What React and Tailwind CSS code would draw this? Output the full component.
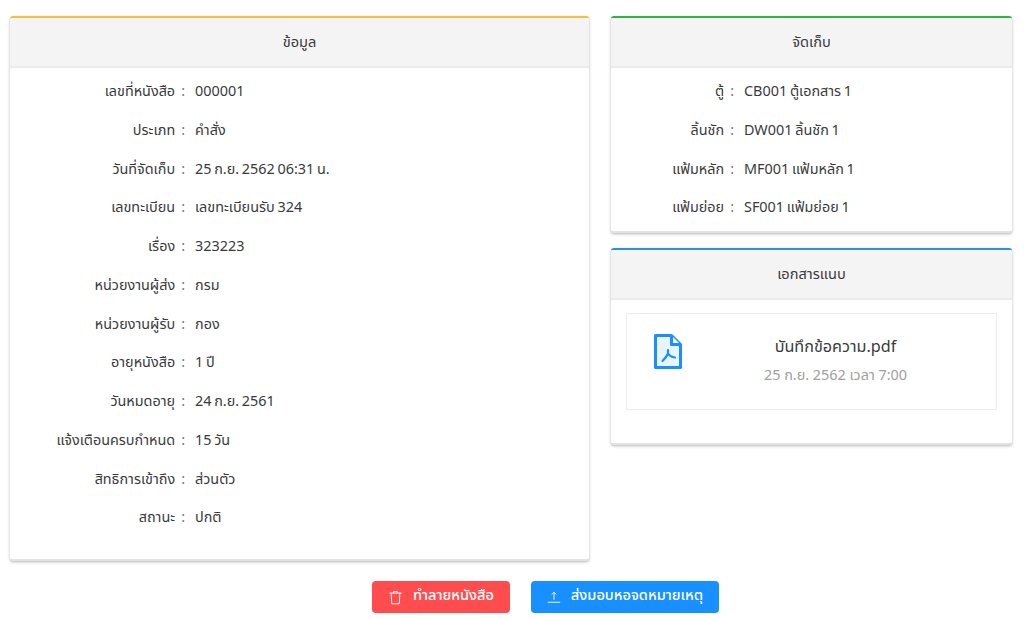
import React from "react";

const info = [
  ["เลขที่หนังสือ", "000001"],
  ["ประเภท", "คำสั่ง"],
  ["วันที่จัดเก็บ", "25 ก.ย. 2562 06:31 น."],
  ["เลขทะเบียน", "เลขทะเบียนรับ 324"],
  ["เรื่อง", "323223"],
  ["หน่วยงานผู้ส่ง", "กรม"],
  ["หน่วยงานผู้รับ", "กอง"],
  ["อายุหนังสือ", "1 ปี"],
  ["วันหมดอายุ", "24 ก.ย. 2561"],
  ["แจ้งเตือนครบกำหนด", "15 วัน"],
  ["สิทธิการเข้าถึง", "ส่วนตัว"],
  ["สถานะ", "ปกติ"],
];
const storage = [
  ["ตู้", "CB001 ตู้เอกสาร 1"],
  ["ลิ้นชัก", "DW001 ลิ้นชัก 1"],
  ["แฟ้มหลัก", "MF001 แฟ้มหลัก 1"],
  ["แฟ้มย่อย", "SF001 แฟ้มย่อย 1"],
];

function Row({ label, value, labelW }) {
  return (
    <div className="flex h-[38.75px] items-center text-[14.4px] leading-none text-[#3a3a3a] [word-spacing:-1px]">
      <div className={`${labelW} flex shrink-0 justify-end whitespace-nowrap`}>
        <span>{label}</span>
        <span className="ml-1.5 text-[#777]">:</span>
      </div>
      <div className="ml-2.5 whitespace-nowrap">{value}</div>
    </div>
  );
}

function Card({ title, top, className, children }) {
  return (
    <section className={`flex flex-col overflow-hidden rounded-[3px] border-t-2 border-b-2 border-b-[#e3e3e3] bg-white shadow-[0_1px_3px_rgba(0,0,0,0.3)] ${top} ${className}`}>
      <header className="flex h-[50px] shrink-0 items-center justify-center border-b-2 border-[#ebebeb] bg-[#f4f4f4] pt-[3px] text-[14.6px] text-[#3a3a3a]">
        {title}
      </header>
      {children}
    </section>
  );
}

export default function App() {
  return (
    <div className="h-[619px] w-[1024px] overflow-hidden bg-white pt-4 pl-2.5" style={{ fontFamily: '"Noto Sans Thai", "Noto Sans", "DejaVu Sans", sans-serif' }}>
      <div className="flex gap-[22px]">
        <Card title="ข้อมูล" top="border-t-[#f5bf3a]" className="h-[545px] w-[579px]">
          <div className="pt-[5px]">
            {info.map(([l, v]) => (
              <Row key={l} label={l} value={v} labelW="w-[175px]" />
            ))}
          </div>
        </Card>
        <div className="flex w-[401px] flex-col gap-[15px]">
          <Card title="จัดเก็บ" top="border-t-[#2fb344]" className="h-[217px]">
            <div className="pt-[5px]">
              {storage.map(([l, v]) => (
                <Row key={l} label={l} value={v} labelW="w-[123px]" />
              ))}
            </div>
          </Card>
          <Card title="เอกสารแนบ" top="border-t-[#2b8fe0]" className="h-[197px]">
            <div className="px-[15px] pt-[13px]">
              <div className="flex h-[97px] border border-[#ececec] pl-[27px] pt-[20px]">
                <svg width="28" height="35" viewBox="0 0 28 35" className="shrink-0">
                  <path d="M1.5 1.5H17.5L26.5 10.5V33.5H1.5Z" fill="#e8f4ff" stroke="#1890ff" strokeWidth="3" strokeLinejoin="round" />
                  <path d="M17.5 1.5V10.5H26.5" fill="#fff" stroke="#1890ff" strokeWidth="3" strokeLinejoin="round" />
                  <path d="M14 16V19.5M14 19.5C13 22 11 24.5 8.5 27M14 19.5C15.5 22 17.5 23 21 23.5" fill="none" stroke="#1890ff" strokeWidth="2.2" strokeLinecap="round" />
                </svg>
                <div className="flex flex-1 flex-col items-center pr-[7px]">
                  <div className="mt-[1px] text-[16.2px] leading-6 text-[#3a3a3a]">บันทึกข้อความ.pdf</div>
                  <div className="mt-[7px] text-[14.4px] leading-5 text-[#a0a0a0]">25 ก.ย. 2562 เวลา 7:00</div>
                </div>
              </div>
            </div>
          </Card>
        </div>
      </div>
      <div className="mt-5 flex justify-center gap-[21px] pl-[57px]">
        <button className="flex h-8 w-[138px] items-center justify-center gap-2.5 rounded bg-[#ff4d4f] text-[14.6px] font-medium text-white">
          <svg width="15" height="15" viewBox="0 0 24 24" fill="none" stroke="currentColor" strokeWidth="1.6" strokeLinecap="round" strokeLinejoin="round">
            <path d="M3 5h18M9 5V2.5h6V5M5 5l1 17h12l1-17" />
          </svg>
          ทำลายหนังสือ
        </button>
        <button className="flex h-8 w-[188px] items-center justify-center gap-2.5 rounded bg-[#1890ff] text-[14.6px] font-medium text-white">
          <svg width="14" height="14" viewBox="0 0 24 24" fill="none" stroke="currentColor" strokeWidth="1.6" strokeLinecap="round" strokeLinejoin="round">
            <path d="M2 21h20M12 16V4M9 7l3-3 3 3" />
          </svg>
          ส่งมอบหอจดหมายเหตุ
        </button>
      </div>
    </div>
  );
}
